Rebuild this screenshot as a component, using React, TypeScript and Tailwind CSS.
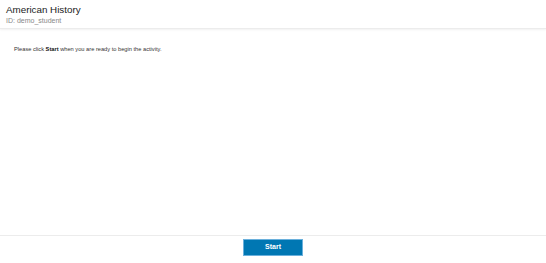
import React from "react";

export default function App() {
  return (
    <div
      className="w-[546px] h-[263px] flex flex-col bg-white text-[#222]"
      style={{ fontFamily: '"Liberation Sans", Arial, sans-serif' }}
    >
      <header className="h-[29px] px-[6px] pt-[4px] border-b border-[#ececec] shadow-[0_1px_2px_rgba(0,0,0,0.06)]">
        <h1 className="text-[9.8px] leading-[11px] text-[#222]">American History</h1>
        <p className="text-[7px] leading-[9px] mt-[1px] text-[#888]">ID: demo_student</p>
      </header>

      <main className="flex-1 px-[14px] pt-[16px]">
        <p className="text-[5.7px] leading-[8px] text-[#333]">
          Please click <b className="font-bold text-[#111]">Start</b> when you are ready to begin the activity.
        </p>
      </main>

      <footer className="h-[28px] border-t border-[#ececec] flex justify-center pt-[3px]">
        <button className="w-[60px] h-[17px] bg-[#0077b3] border border-[#6ab0dc] text-white text-[7px] font-bold">
          Start
        </button>
      </footer>
    </div>
  );
}
